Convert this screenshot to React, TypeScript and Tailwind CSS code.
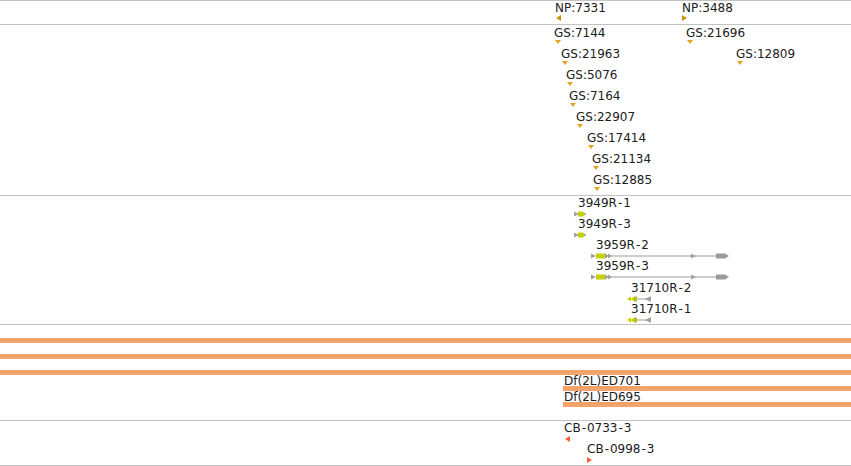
import React from "react";

type Feat = { text: string; x: number; glyph: React.ReactNode };

const LINE = "border-b border-[#c3c3c3]";
const BAR = "h-[5px] bg-[#f5a36b]";

// the hyphens of the viewer's font run a little wider than DejaVu's
const Name = ({ text }: { text: string }) => (
  <>
    {text.split("-").map((part, i) => (
      <React.Fragment key={i}>
        {i > 0 && <span className="mx-[1px]">-</span>}
        {part}
      </React.Fragment>
    ))}
  </>
);

const Tri = ({ dir, color }: { dir: "down" | "left" | "right"; color: string }) => {
  const w = dir === "down" ? 6 : 5;
  const h = dir === "down" ? 4 : 6;
  const pts =
    dir === "down" ? "0,0 6,0 3,4" : dir === "left" ? "5,0 5,6 0,3" : "0,0 0,6 5,3";
  return (
    <svg width={w} height={h} viewBox={`0 0 ${w} ${h}`} className="block">
      <polygon points={pts} fill={color} />
    </svg>
  );
};

// short forward transcript (3949R)
const GlyphA = () => (
  <svg width={13} height={6} viewBox="0 0 13 6" className="block">
    <polygon points="0,0.5 5,3 0,5.5" fill="#a0a0a0" />
    <polygon points="4,0.5 9,0.5 11.5,3 9,5.5 4,5.5" fill="#c6d100" />
    <polygon points="10,1.5 12.5,3 10,4.5" fill="#a8a8a8" />
  </svg>
);

// long forward transcript (3959R)
const GlyphB = () => (
  <svg width={139} height={6} viewBox="0 0 139 6" className="block">
    <line x1={19} y1={3} x2={126} y2={3} stroke="#9c9c9c" strokeWidth={1} />
    <polygon points="0,0.5 5,3 0,5.5" fill="#a0a0a0" />
    <rect x={5} y={0.5} width={9.5} height={5} fill="#c6d100" />
    <polygon points="14,0.5 18,3 14,5.5" fill="#a0a0a0" />
    <polygon points="17,0.5 21,3 17,5.5" fill="#a0a0a0" />
    <polygon points="100,0.5 105,3 100,5.5" fill="#a0a0a0" />
    <polygon points="125,0.5 134,0.5 138,3 134,5.5 125,5.5" fill="#9a9a9a" />
  </svg>
);

// short reverse transcript (31710R)
const GlyphC = () => (
  <svg width={25} height={6} viewBox="0 0 25 6" className="block">
    <line x1={10} y1={3} x2={24} y2={3} stroke="#9c9c9c" strokeWidth={1} />
    <polygon points="0,3 4,0.5 4,5.5" fill="#c6d100" />
    <polygon points="3.5,3 7.5,0.5 7.5,5.5" fill="#c6d100" />
    <rect x={7} y={0.5} width={3} height={5} fill="#b5bf20" />
    <polygon points="18,3 23,0.5 23,5.5" fill="#a0a0a0" />
    <rect x={23} y={0.5} width={1} height={5} fill="#a0a0a0" />
  </svg>
);

// a feature: its label, and the glyph drawn under it, at its genome position
const Feature = ({ f, gap }: { f: Feat; gap: string }) => (
  <div className={`absolute top-0 flex flex-col items-start ${gap}`} style={{ left: f.x - 1 }}>
    <span className="whitespace-nowrap text-[12px] leading-[13px] text-[#202020]">
      <Name text={f.text} />
    </span>
    <div className="ml-[1px]">{f.glyph}</div>
  </div>
);

const Row = ({ feats, gap = "gap-0", h = "h-[21px]" }: { feats: Feat[]; gap?: string; h?: string }) => (
  <div className={`relative ${h}`}>
    {feats.map((f) => (
      <Feature key={f.text} f={f} gap={gap} />
    ))}
  </div>
);

const gsTri = <Tri dir="down" color="#e9a21f" />;
const gs = (text: string, x: number): Feat => ({ text, x, glyph: gsTri });

const gsRows: Feat[][] = [
  [gs("GS:7144", 555), gs("GS:21696", 687)],
  [gs("GS:21963", 562), gs("GS:12809", 737)],
  [gs("GS:5076", 567)],
  [gs("GS:7164", 570)],
  [gs("GS:22907", 577)],
  [gs("GS:17414", 588)],
  [gs("GS:21134", 593)],
  [gs("GS:12885", 594)],
];

const geneRows: Feat[][] = [
  [{ text: "3949R-1", x: 579, glyph: <div className="-ml-[5px]"><GlyphA /></div> }],
  [{ text: "3949R-3", x: 579, glyph: <div className="-ml-[5px]"><GlyphA /></div> }],
  [{ text: "3959R-2", x: 597, glyph: <div className="-ml-[6px]"><GlyphB /></div> }],
  [{ text: "3959R-3", x: 597, glyph: <div className="-ml-[6px]"><GlyphB /></div> }],
  [{ text: "31710R-2", x: 632, glyph: <div className="-ml-[5px]"><GlyphC /></div> }],
  [{ text: "31710R-1", x: 632, glyph: <div className="-ml-[5px]"><GlyphC /></div> }],
];

export default function App() {
  return (
    <div
      className="w-[851px] h-[466px] overflow-hidden bg-white border-t border-[#c3c3c3]"
      style={{ fontFamily: '"DejaVu Sans", Verdana, sans-serif' }}
    >
      {/* insertions NP */}
      <div className={`h-[24px] pt-[1px] ${LINE}`}>
        <Row
          h="h-[22px]"
          feats={[
            { text: "NP:7331", x: 556, glyph: <Tri dir="left" color="#c9920d" /> },
            { text: "NP:3488", x: 683, glyph: <div className="-ml-[1px]"><Tri dir="right" color="#c9920d" /></div> },
          ]}
        />
      </div>

      {/* insertions GS */}
      <div className={`flex h-[171px] flex-col pt-[2px] ${LINE}`}>
        {gsRows.map((r, i) => (
          <Row key={i} feats={r} />
        ))}
      </div>

      {/* transcripts */}
      <div className={`flex h-[129px] flex-col pt-[1px] ${LINE}`}>
        {geneRows.map((r, i) => (
          <Row key={i} feats={r} gap="gap-[1px]" h={i === 3 ? "h-[22px]" : "h-[21px]"} />
        ))}
      </div>

      {/* deficiencies */}
      <div className={`flex h-[96px] flex-col pt-[13px] ${LINE}`}>
        <div className="flex flex-col gap-[11px]">
          <div className={BAR} />
          <div className={BAR} />
          <div className={BAR} />
        </div>
        <div className="mt-[1px] flex flex-col gap-[1px] pl-[563px]">
          {["Df(2L)ED701", "Df(2L)ED695"].map((t) => (
            <div key={t} className="flex flex-col">
              <span className="pl-[1px] whitespace-nowrap text-[12px] leading-[10px] text-[#202020]">{t}</span>
              <div className={BAR} />
            </div>
          ))}
        </div>
      </div>

      {/* CB insertions */}
      <div className={`flex h-[45px] flex-col pt-[1px] ${LINE}`}>
        <Row feats={[{ text: "CB-0733-3", x: 565, glyph: <Tri dir="left" color="#f0603d" /> }]} gap="gap-[1px]" />
        <Row
          feats={[{ text: "CB-0998-3", x: 588, glyph: <div className="-ml-[1px]"><Tri dir="right" color="#f0603d" /></div> }]}
          gap="gap-[1px]"
        />
      </div>
    </div>
  );
}
